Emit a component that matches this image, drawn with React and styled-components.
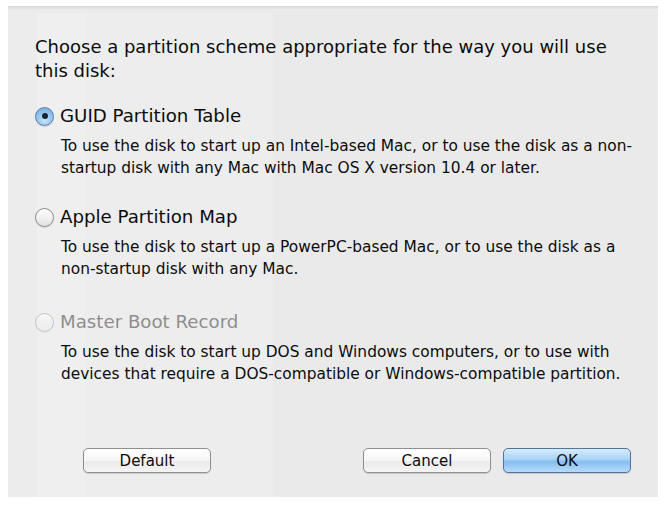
import React from "react";
import styled, { createGlobalStyle } from "styled-components";

const GlobalStyle = createGlobalStyle`
  body {
    margin: 0;
    background: #ffffff;
    font-family: "DejaVu Sans", "Liberation Sans", sans-serif;
  }
`;

const Page = styled.div`
  width: 667px;
  height: 507px;
  padding: 6px 0 0 8px;
  box-sizing: border-box;
`;

const Sheet = styled.div`
  width: 650px;
  height: 491px;
  box-sizing: border-box;
  padding: 29px 20px 24px 27px;
  display: flex;
  flex-direction: column;
  color: #0c0c0c;
  background:
    linear-gradient(180deg, #d9d9d9 0px, #ececec 4px, rgba(236, 236, 236, 0) 10px),
    linear-gradient(90deg, #ececec 0px, #ececec 29px, #efefef 29px, #efefef 77px, #ededed 77px, #ededed 265px, #eaeaea 265px);
`;

const Heading = styled.p`
  margin: 0;
  font-size: 18px;
  line-height: 24px;
  white-space: nowrap;
`;

const Option = styled.div`
  display: flex;
  flex-direction: column;
  margin-top: ${p => p.$gap}px;
`;

const RadioRow = styled.label`
  display: flex;
  align-items: center;
  gap: 6px;
  font-size: 18.2px;
  line-height: 24px;
  color: ${p => (p.$disabled ? "#8e8e8e" : "#0c0c0c")};
`;

const Radio = styled.span`
  width: 19px;
  height: 19px;
  border-radius: 50%;
  box-sizing: border-box;
  display: flex;
  align-items: center;
  justify-content: center;
  border: 1px solid ${p => (p.$checked ? "#5d7ea6" : p.$disabled ? "#c4c4c4" : "#8d8d8d")};
  background: ${p =>
    p.$checked
      ? "radial-gradient(circle at 50% 70%, #c6e4fa 0%, #8fc2ec 55%, #6aa5d9 100%)"
      : p.$disabled
      ? "linear-gradient(180deg, #f7f7f7, #ececec)"
      : "linear-gradient(180deg, #fdfdfd 0%, #eeeeee 60%, #e2e2e2 100%)"};
  box-shadow: 0 1px 1px rgba(0, 0, 0, ${p => (p.$disabled ? 0.03 : 0.12)});

  &::after {
    content: "";
    display: ${p => (p.$checked ? "block" : "none")};
    width: 6px;
    height: 6px;
    border-radius: 50%;
    background: #1d2530;
  }
`;

const Description = styled.p`
  margin: 7px 0 0 26px;
  font-size: 15.4px;
  line-height: 22px;
  white-space: nowrap;
`;

const ButtonBar = styled.div`
  margin-top: auto;
  display: flex;
  justify-content: space-between;
  padding: 0 7px 0 48px;
`;

const Group = styled.div`
  display: flex;
  gap: 12px;
`;

const Button = styled.button`
  width: 128px;
  height: 25px;
  border-radius: 5px;
  font-family: "DejaVu Sans", "Liberation Sans", sans-serif;
  font-size: 15px;
  color: #0c0c0c;
  padding: 0;
  border: 1px solid ${p => (p.$primary ? "#55739b" : "#8f8f8f")};
  background: ${p =>
    p.$primary
      ? "linear-gradient(180deg, #d6ecfc 0%, #a9d3f6 45%, #86bdf0 55%, #b5dcfb 100%)"
      : "linear-gradient(180deg, #ffffff 0%, #f6f6f6 50%, #ebebeb 55%, #f4f4f4 100%)"};
  box-shadow: 0 1px 1px rgba(0, 0, 0, 0.15);
`;

const options = [
  {
    label: "GUID Partition Table",
    checked: true,
    gap: 21,
    lines: [
      "To use the disk to start up an Intel-based Mac, or to use the disk as a non-",
      "startup disk with any Mac with Mac OS X version 10.4 or later.",
    ],
  },
  {
    label: "Apple Partition Map",
    gap: 26,
    lines: [
      "To use the disk to start up a PowerPC-based Mac, or to use the disk as a",
      "non-startup disk with any Mac.",
    ],
  },
  {
    label: "Master Boot Record",
    disabled: true,
    gap: 30,
    lines: [
      "To use the disk to start up DOS and Windows computers, or to use with",
      "devices that require a DOS-compatible or Windows-compatible partition.",
    ],
  },
];

export default function App() {
  return (
    <Page>
      <GlobalStyle />
      <Sheet>
        <Heading>
          Choose a partition scheme appropriate for the way you will use
          <br />
          this disk:
        </Heading>
        {options.map(o => (
          <Option key={o.label} $gap={o.gap}>
            <RadioRow $disabled={o.disabled}>
              <Radio $checked={o.checked} $disabled={o.disabled} />
              {o.label}
            </RadioRow>
            <Description>
              {o.lines[0]}
              <br />
              {o.lines[1]}
            </Description>
          </Option>
        ))}
        <ButtonBar>
          <Button>Default</Button>
          <Group>
            <Button>Cancel</Button>
            <Button $primary>OK</Button>
          </Group>
        </ButtonBar>
      </Sheet>
    </Page>
  );
}
